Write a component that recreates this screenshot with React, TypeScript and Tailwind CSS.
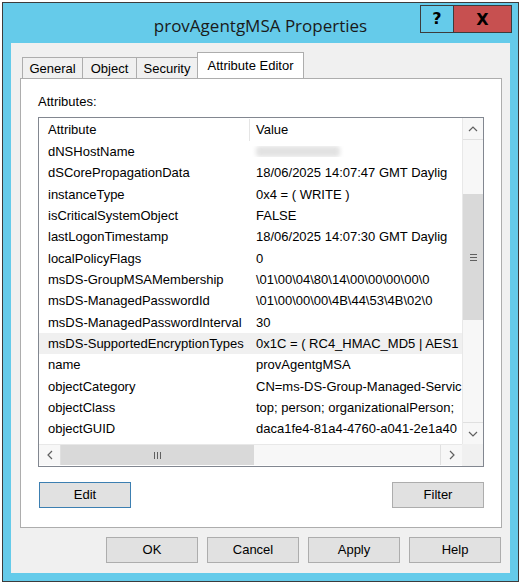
import React from "react";

const rows: [string, string | null][] = [
  ["dNSHostName", null],
  ["dSCorePropagationData", "18/06/2025 14:07:47 GMT Daylig"],
  ["instanceType", "0x4 = ( WRITE )"],
  ["isCriticalSystemObject", "FALSE"],
  ["lastLogonTimestamp", "18/06/2025 14:07:30 GMT Daylig"],
  ["localPolicyFlags", "0"],
  ["msDS-GroupMSAMembership", "\\01\\00\\04\\80\\14\\00\\00\\00\\00\\0"],
  ["msDS-ManagedPasswordId", "\\01\\00\\00\\00\\4B\\44\\53\\4B\\02\\0"],
  ["msDS-ManagedPasswordInterval", "30"],
  ["msDS-SupportedEncryptionTypes", "0x1C = ( RC4_HMAC_MD5 | AES1"],
  ["name", "provAgentgMSA"],
  ["objectCategory", "CN=ms-DS-Group-Managed-Servic"],
  ["objectClass", "top; person; organizationalPerson;"],
  ["objectGUID", "daca1fe4-81a4-4760-a041-2e1a40"],
];

const font = { fontFamily: '"Liberation Sans", Arial, sans-serif' };

function Chevron({ dir }: { dir: "up" | "down" | "left" | "right" }) {
  const pts =
    dir === "up"
      ? "1,6 5,2 9,6"
      : dir === "down"
      ? "1,2 5,6 9,2"
      : dir === "left"
      ? "6,1 2,5 6,9"
      : "2,1 6,5 2,9";
  const w = dir === "up" || dir === "down" ? 10 : 8;
  const h = dir === "up" || dir === "down" ? 8 : 10;
  return (
    <svg width={w} height={h} viewBox={`0 0 ${w} ${h}`}>
      <polyline points={pts} fill="none" stroke="#606060" strokeWidth="1.2" />
    </svg>
  );
}

function Btn({ label, focused }: { label: string; focused?: boolean }) {
  return (
    <div
      className={`w-[92px] h-[26px] flex items-center justify-center bg-[#e1e1e1] border text-[13px] text-black ${
        focused ? "border-[#3c7fb1]" : "border-[#adadad]"
      }`}
    >
      {label}
    </div>
  );
}

function Tab({ label, w, selected }: { label: string; w: string; selected?: boolean }) {
  if (selected) {
    return (
      <div
        className={`${w} h-[26px] -ml-[1px] relative z-10 bg-white border-t border-l border-r border-[#adadad] flex items-start justify-center pt-[3px] text-[13px] text-black`}
      >
        {label}
      </div>
    );
  }
  return (
    <div
      className={`${w} h-[21px] -ml-[1px] first:ml-0 bg-[#f0f0f0] border-t border-l border-r border-[#adadad] flex items-center justify-center pt-[1px] text-[13px] text-black`}
    >
      {label}
    </div>
  );
}

export default function App() {
  return (
    <div className="w-[523px] h-[586px] bg-white pt-[2px] pl-[2px]" style={font}>
      <div className="relative w-[517px] h-[580px] border border-[#3c3c3c] bg-[#65cbea] flex flex-col">
        {/* title bar */}
        <div
          className="h-[40px] flex items-center justify-center pt-[6px] text-[17px] text-[#1a1a1a]"
          style={{ fontFamily: '"Open Sans", "Noto Sans", sans-serif' }}
        >
          provAgentgMSA Properties
        </div>
        <div className="absolute left-[417px] top-[2px] w-[92px] h-[28px] border border-[#3c3c3c] flex">
          <div
            className="w-[33px] h-full border-r border-[#3c3c3c] flex items-center justify-center text-[16px] font-bold text-black"
            style={{ fontFamily: '"DejaVu Sans", sans-serif' }}
          >
            ?
          </div>
          <div
            className="flex-1 h-full bg-[#c75050] flex items-center justify-center text-[16px] font-bold text-black pt-[2px]"
            style={{ fontFamily: '"DejaVu Sans", sans-serif' }}
          >
            X
          </div>
        </div>

        {/* client area */}
        <div className="ml-[8px] w-[499px] h-[530px] bg-[#f0f0f0] flex flex-col pl-[9px]">
          {/* tabs */}
          <div className="mt-[10px] h-[25px] flex items-end pl-[2px]">
            <Tab label="General" w="w-[61px]" />
            <Tab label="Object" w="w-[55px]" />
            <Tab label="Security" w="w-[62px]" />
            <Tab label="Attribute Editor" w="w-[107px]" selected />
          </div>
          {/* panel */}
          <div className="w-[482px] h-[450px] bg-white border border-[#adadad] flex flex-col pl-[17px]">
            <div className="mt-[15px] h-[16px] leading-[16px] text-[13px] text-black">Attributes:</div>
            {/* list */}
            <div className="mt-[7px] w-[446px] h-[350px] border border-[#828790] flex">
              <div className="w-[423px] flex flex-col">
                <div className="h-[326px] flex flex-col overflow-hidden">
                  <div className="h-[23px] pt-[1px] flex shrink-0 text-[13px] text-black">
                    <div className="w-[211px] pl-[9px] flex items-center border-r border-[#e5e5e5]">Attribute</div>
                    <div className="pl-[6px] flex items-center">Value</div>
                  </div>
                  {rows.map(([a, v], i) => (
                    <div
                      key={a}
                      className={`h-[21.33px] shrink-0 flex items-center text-[13px] text-black ${
                        i === 9 ? "bg-[#f0f0f0]" : ""
                      }`}
                    >
                      <div className="w-[211px] pl-[9px] whitespace-nowrap overflow-hidden">{a}</div>
                      <div className="w-[212px] pl-[6px] whitespace-nowrap overflow-hidden">
                        {v === null ? (
                          <div className="w-[84px] h-[11px] bg-[#e2e2e2] blur-[2px] rounded-sm" />
                        ) : (
                          v
                        )}
                      </div>
                    </div>
                  ))}
                </div>
                {/* horizontal scrollbar */}
                <div className="h-[21px] flex bg-[#f7f7f7] border-t border-[#e8e8e8]">
                  <div className="w-[22px] h-full flex items-center justify-center border-r border-[#e0e0e0]">
                    <Chevron dir="left" />
                  </div>
                  <div className="w-[193px] h-full bg-[#d9d9d9] flex items-center justify-center">
                    <div className="flex gap-[2px]">
                      <div className="w-[1px] h-[7px] bg-[#606060]" />
                      <div className="w-[1px] h-[7px] bg-[#606060]" />
                      <div className="w-[1px] h-[7px] bg-[#606060]" />
                    </div>
                  </div>
                  <div className="flex-1" />
                  <div className="w-[22px] h-full flex items-center justify-center border-l border-[#e0e0e0]">
                    <Chevron dir="right" />
                  </div>
                </div>
              </div>
              {/* vertical scrollbar */}
              <div className="flex-1 flex flex-col">
                <div className="h-[326px] flex flex-col bg-[#f7f7f7] border-l border-[#e8e8e8]">
                  <div className="h-[22px] flex items-center justify-center border-b border-[#e0e0e0]">
                    <Chevron dir="up" />
                  </div>
                  <div className="h-[54px]" />
                  <div className="h-[126px] bg-[#d9d9d9] flex items-center justify-center">
                    <div className="flex flex-col gap-[2px]">
                      <div className="w-[7px] h-[1px] bg-[#606060]" />
                      <div className="w-[7px] h-[1px] bg-[#606060]" />
                      <div className="w-[7px] h-[1px] bg-[#606060]" />
                    </div>
                  </div>
                  <div className="flex-1" />
                  <div className="h-[22px] flex items-center justify-center border-t border-[#e0e0e0]">
                    <Chevron dir="down" />
                  </div>
                </div>
                <div className="flex-1 bg-[#f0f0f0]" />
              </div>
            </div>
            {/* Edit / Filter */}
            <div className="mt-[15px] ml-[1px] w-[445px] flex justify-between">
              <Btn label="Edit" focused />
              <Btn label="Filter" />
            </div>
          </div>
          {/* bottom buttons */}
          <div className="mt-[9px] ml-[86px] flex gap-[9px]">
            <Btn label="OK" />
            <Btn label="Cancel" />
            <Btn label="Apply" />
            <Btn label="Help" />
          </div>
        </div>
      </div>
    </div>
  );
}
